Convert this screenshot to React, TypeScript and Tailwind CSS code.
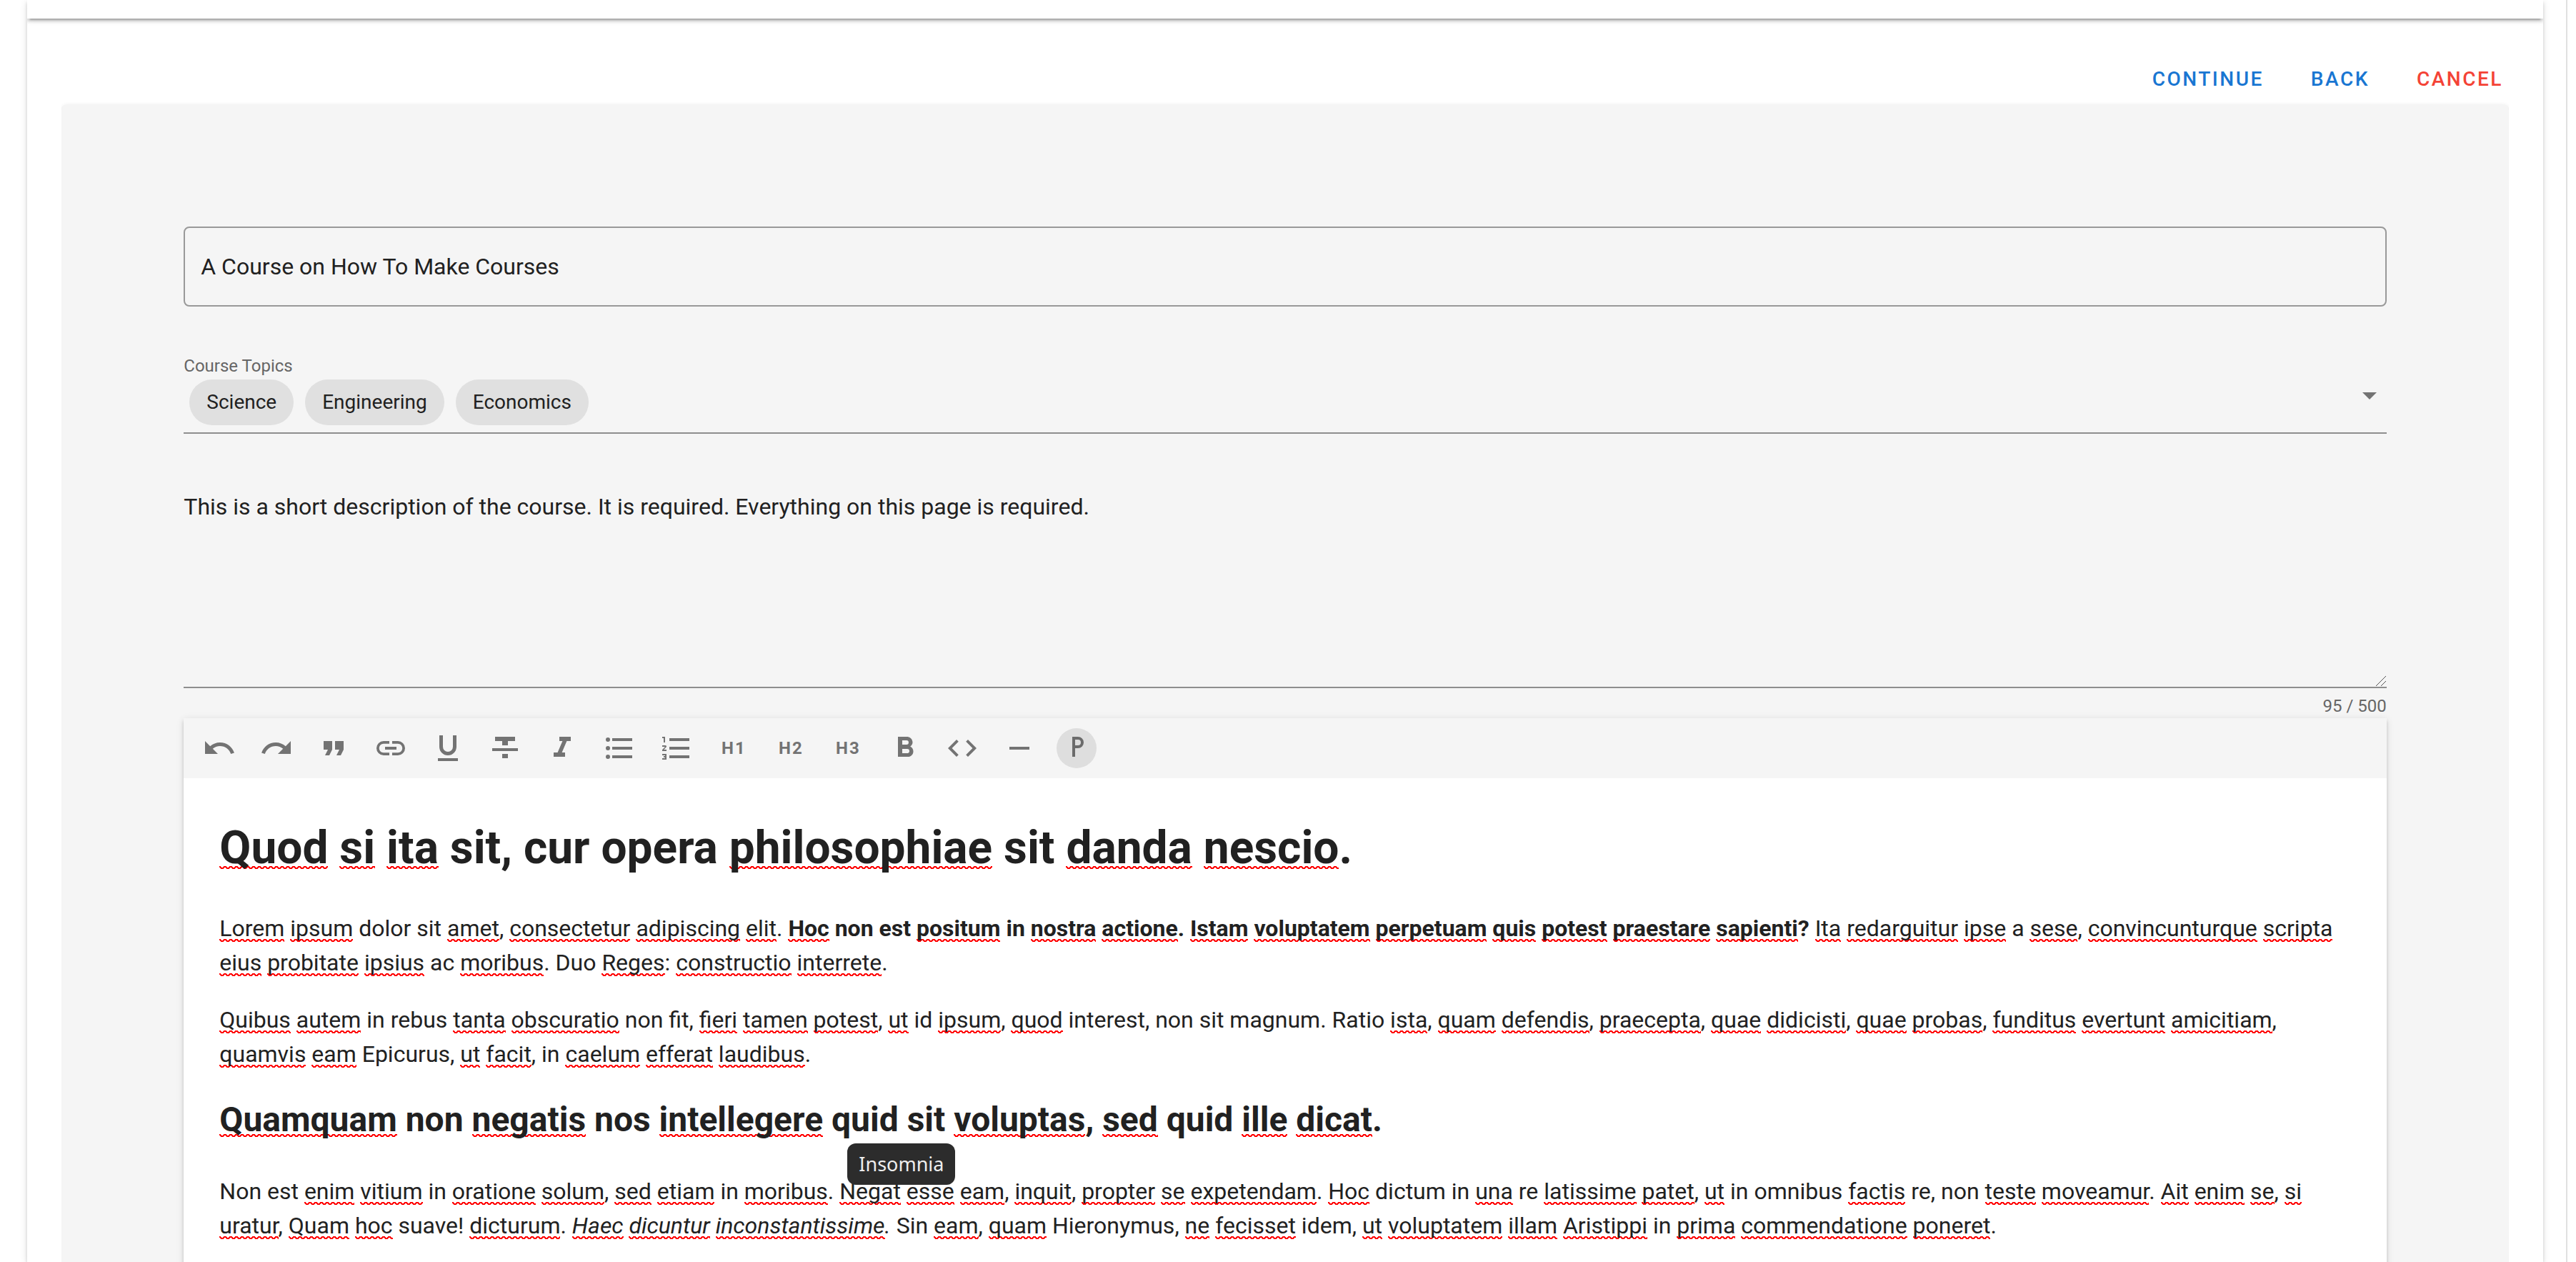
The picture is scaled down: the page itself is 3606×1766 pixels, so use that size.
import React from "react";

const ICON_PATHS = {
  undo: "M12.5,8C9.85,8 7.45,9 5.6,10.6L2,7V16H11L7.38,12.38C8.77,11.22 10.54,10.5 12.5,10.5C16.04,10.5 19.05,12.81 20.1,16L22.47,15.22C21.08,11.03 17.15,8 12.5,8Z",
  redo: "M18.4,10.6C16.55,9 14.15,8 11.5,8C6.85,8 2.92,11.03 1.54,15.22L3.9,16C4.95,12.81 7.95,10.5 11.5,10.5C13.45,10.5 15.23,11.22 16.62,12.38L13,16H22V7L18.4,10.6Z",
  quote: "M14,17H17L19,13V7H13V13H16M6,17H9L11,13V7H5V13H8L6,17Z",
  link: "M3.9,12C3.9,10.29 5.29,8.9 7,8.9H11V7H7A5,5 0 0,0 2,12A5,5 0 0,0 7,17H11V15.1H7C5.29,15.1 3.9,13.71 3.9,12M8,13H16V11H8V13M17,7H13V8.9H17C18.71,8.9 20.1,10.29 20.1,12C20.1,13.71 18.71,15.1 17,15.1H13V17H17A5,5 0 0,0 22,12A5,5 0 0,0 17,7Z",
  underline: "M5,21H19V19H5V21M12,17A6,6 0 0,0 18,11V3H15.5V11A3.5,3.5 0 0,1 12,14.5A3.5,3.5 0 0,1 8.5,11V3H6V11A6,6 0 0,0 12,17Z",
  strike: "M3,14H21V12H3M5,4V7H10V10H14V7H19V4M10,19H14V16H10V19Z",
  italic: "M10,4V7H12.21L8.79,15H6V18H14V15H11.79L15.21,7H18V4H10Z",
  bullets: "M7,5H21V7H7V5M7,13V11H21V13H7M4,4.5A1.5,1.5 0 0,1 5.5,6A1.5,1.5 0 0,1 4,7.5A1.5,1.5 0 0,1 2.5,6A1.5,1.5 0 0,1 4,4.5M4,10.5A1.5,1.5 0 0,1 5.5,12A1.5,1.5 0 0,1 4,13.5A1.5,1.5 0 0,1 2.5,12A1.5,1.5 0 0,1 4,10.5M7,19V17H21V19H7M4,16.5A1.5,1.5 0 0,1 5.5,18A1.5,1.5 0 0,1 4,19.5A1.5,1.5 0 0,1 2.5,18A1.5,1.5 0 0,1 4,16.5Z",
  numbers: "M7,13V11H21V13H7M7,19V17H21V19H7M7,7V5H21V7H7M3,8V5H2V4H4V8H3M2,17V16H5V20H2V19H4V18.5H3V17.5H4V17H2M4.25,10A0.75,0.75 0 0,1 5,10.75C5,10.95 4.92,11.14 4.79,11.27L3.12,13H5V14H2V13.08L4,11H2V10H4.25Z",
  bold: "M13.5,15.5H10V12.5H13.5A1.5,1.5 0 0,1 15,14A1.5,1.5 0 0,1 13.5,15.5M10,6.5H13A1.5,1.5 0 0,1 14.5,8A1.5,1.5 0 0,1 13,9.5H10M15.6,10.79C16.57,10.11 17.25,9 17.25,8C17.25,5.74 15.5,4 13.25,4H7V18H14.04C16.14,18 17.75,16.3 17.75,14.21C17.75,12.69 16.89,11.39 15.6,10.79Z",
  code: "M14.6,16.6L19.2,12L14.6,7.4L16,6L22,12L16,18L14.6,16.6M9.4,16.6L4.8,12L9.4,7.4L8,6L2,12L8,18L9.4,16.6Z",
  minus: "M19,13H5V11H19V13Z",
  paragraph: "M13,10A2,2 0 0,0 15,8A2,2 0 0,0 13,6H11V10H13M13,4A4,4 0 0,1 17,8A4,4 0 0,1 13,12H11V18H9V4H13Z",
  menuDown: "M7,10L12,15L17,10H7Z",
};

type IconName = keyof typeof ICON_PATHS;
type Tool = { label: string; icon?: IconName; text?: string; active?: boolean };

const TOOLS: Tool[] = [
  { label: "Undo", icon: "undo" },
  { label: "Redo", icon: "redo" },
  { label: "Block quote", icon: "quote" },
  { label: "Link", icon: "link" },
  { label: "Underline", icon: "underline" },
  { label: "Strikethrough", icon: "strike" },
  { label: "Italic", icon: "italic" },
  { label: "Bullet list", icon: "bullets" },
  { label: "Ordered list", icon: "numbers" },
  { label: "Heading 1", text: "H1" },
  { label: "Heading 2", text: "H2" },
  { label: "Heading 3", text: "H3" },
  { label: "Bold", icon: "bold" },
  { label: "Code", icon: "code" },
  { label: "Horizontal line", icon: "minus" },
  { label: "Paragraph", icon: "paragraph", active: true },
];

const TOPICS = ["Science", "Engineering", "Economics"];

const DESCRIPTION =
  "This is a short description of the course. It is required. Everything on this page is required.";

function Icon({ name }: { name: IconName }) {
  return (
    <svg viewBox="0 0 24 24" className="size-12 shrink-0 fill-current" aria-hidden="true">
      <path d={ICON_PATHS[name]} />
    </svg>
  );
}

const SQUIGGLE =
  "bg-[linear-gradient(45deg,transparent_23%,#f00_25%,#f00_42%,transparent_44%),linear-gradient(135deg,transparent_56%,#f00_58%,#f00_75%,transparent_77%)] bg-[length:8px_4px] bg-repeat-x";

const SQUIGGLE_POSITION = {
  body: "bg-[position:left_bottom]",
  h2: "bg-[position:left_bottom_4px]",
  h1: "bg-[position:left_bottom_8px]",
};

/* Words in square brackets are drawn with a spelling squiggle. */
function Spell({ text, size = "body" }: { text: string; size?: keyof typeof SQUIGGLE_POSITION }) {
  return (
    <>
      {text.split(/(\[[^\]]+\])/).map((part, i) =>
        part.startsWith("[") ? (
          <span key={i} className={`${SQUIGGLE} ${SQUIGGLE_POSITION[size]}`}>
            {part.slice(1, -1)}
          </span>
        ) : (
          part
        ),
      )}
    </>
  );
}

function ActionButton({ label, color }: { label: string; color: string }) {
  return (
    <button
      type="button"
      className={`h-18 px-8 pt-0.5 text-[28px] font-medium uppercase tracking-[0.09em] ${color}`}
    >
      {label}
    </button>
  );
}

function Toolbar() {
  return (
    <div
      role="toolbar"
      aria-label="Formatting"
      className="flex h-21 items-center gap-6 bg-[#f5f5f5] px-[22px] text-[#737373]"
    >
      {TOOLS.map((tool) => (
        <button
          key={tool.label}
          type="button"
          aria-label={tool.label}
          className={`flex size-14 items-center justify-center rounded-full text-2xl font-bold tracking-[2px] ${
            tool.active ? "bg-[#dedede] text-[#6b6b6b]" : ""
          }`}
        >
          {tool.icon ? <Icon name={tool.icon} /> : tool.text}
        </button>
      ))}
    </div>
  );
}

export default function App() {
  return (
    <div className="flex h-screen overflow-hidden bg-white font-[Roboto,sans-serif] text-[32px] leading-12 text-[#212121]">
      <main className="ml-[38px] mr-8 flex-1 shadow-[0_6px_2px_-4px_rgba(0,0,0,0.2),0_4px_4px_0_rgba(0,0,0,0.14),0_2px_10px_0_rgba(0,0,0,0.12)]">
        <div className="h-full overflow-hidden">
          <header className="h-[26px] shadow-[0_6px_2px_-4px_rgba(0,0,0,0.2),0_4px_4px_0_rgba(0,0,0,0.14),0_2px_10px_0_rgba(0,0,0,0.12)]" />
          <div className="flex justify-end gap-0.5 pr-6 pt-12">
            <ActionButton label="Continue" color="text-[#1976d2]" />
            <ActionButton label="Back" color="text-[#1976d2]" />
            <ActionButton label="Cancel" color="text-[#f44336]" />
          </div>
          <div className="mx-12 overflow-x-clip">
            <form className="rounded-lg bg-[#f5f5f5] p-[5%] shadow-[0_4px_2px_-2px_rgba(0,0,0,0.2),0_2px_2px_0_rgba(0,0,0,0.14),0_2px_6px_0_rgba(0,0,0,0.12)]">
              <input
                type="text"
                aria-label="Course title"
                defaultValue="A Course on How To Make Courses"
                className="block h-28 w-full rounded-lg border-2 border-[#999] bg-transparent px-[22px] outline-none"
              />

              <div className="mt-[68px] border-b-2 border-[#8e8e8e]">
                <div id="topics-label" className="text-2xl leading-[30px] text-[#666]">
                  Course Topics
                </div>
                <button
                  type="button"
                  aria-labelledby="topics-label"
                  aria-haspopup="listbox"
                  className="flex w-full items-start justify-between pb-2.5 pl-2 pt-0.5"
                >
                  <span className="flex gap-4 pt-0.5">
                    {TOPICS.map((topic) => (
                      <span
                        key={topic}
                        className="flex h-16 items-center rounded-full bg-[#e0e0e0] px-6 text-[28px]"
                      >
                        {topic}
                      </span>
                    ))}
                  </span>
                  <span className="text-[#737373]">
                    <Icon name="menuDown" />
                  </span>
                </button>
              </div>

              <div className="relative pt-[78px]">
                <textarea
                  aria-label="Course description"
                  defaultValue={DESCRIPTION}
                  spellCheck={false}
                  className="block h-[278px] w-full resize-none border-b-2 border-[#8e8e8e] bg-transparent outline-none"
                />
                <svg
                  viewBox="0 0 14 14"
                  className="absolute bottom-[3px] right-px size-3.5 fill-none stroke-[#555]"
                  aria-hidden="true"
                >
                  <path d="M0 14L14 0M7 14L14 7" />
                </svg>
              </div>
              <div className="flex h-[42px] items-center justify-end pt-2 text-2xl text-[#666]">
                95 / 500
              </div>

              <section className="bg-white shadow-[0_6px_2px_-4px_rgba(0,0,0,0.2),0_4px_4px_0_rgba(0,0,0,0.14),0_2px_10px_0_rgba(0,0,0,0.12)]">
                <Toolbar />
                <div className="p-[50px]">
                  <h1 className="mb-10 text-[64px] font-bold leading-24">
                    <Spell
                      size="h1"
                      text="[Quod] [si] [ita] sit, cur opera [philosophiae] sit [danda] [nescio]."
                    />
                  </h1>
                  <p className="mb-8">
                    <Spell text="[Lorem] [ipsum] dolor sit [amet], [consectetur] [adipiscing] [elit]. " />
                    <strong className="font-bold">
                      <Spell text="[Hoc] non est [positum] in [nostra] [actione]. [Istam] [voluptatem] [perpetuam] [quis] [potest] [praestare] [sapienti]?" />
                    </strong>
                    <Spell text=" [Ita] [redarguitur] [ipse] a [sese], [convincunturque] [scripta] [eius] [probitate] [ipsius] ac [moribus]. Duo [Reges]: [constructio] [interrete]." />
                  </p>
                  <p className="mb-8">
                    <Spell text="[Quibus] [autem] in rebus [tanta] [obscuratio] non fit, [fieri] [tamen] [potest], [ut] id [ipsum], [quod] interest, non sit magnum. Ratio [ista], [quam] [defendis], [praecepta], [quae] [didicisti], [quae] [probas], [funditus] [evertunt] [amicitiam], [quamvis] [eam] Epicurus, [ut] [facit], in [caelum] [efferat] [laudibus]." />
                  </p>
                  <div className="relative mb-10">
                    <h2 className="text-5xl font-bold leading-18">
                      <Spell
                        size="h2"
                        text="[Quamquam] non [negatis] nos [intellegere] quid sit [voluptas], [sed] quid [ille] [dicat]."
                      />
                    </h2>
                    <div
                      role="tooltip"
                      className="absolute left-[879px] top-[69px] rounded-xl bg-[#2c2c2c] px-4 py-1 font-['Noto_Sans',sans-serif] text-[27px] leading-[50px] text-[#eee]"
                    >
                      Insomnia
                    </div>
                  </div>
                  <p>
                    <Spell text="Non est [enim] [vitium] in [oratione] [solum], [sed] [etiam] in [moribus]. [Negat] [esse] [eam], [inquit], [propter] [se] [expetendam]. [Hoc] dictum in [una] re [latissime] [patet], [ut] in omnibus [factis] re, non [teste] [moveamur]. [Ait] [enim] [se], [si] [uratur], [Quam] [hoc] suave! [dicturum]. " />
                    <em>
                      <Spell text="[Haec] [dicuntur] [inconstantissime]." />
                    </em>
                    <Spell text=" Sin [eam], [quam] Hieronymus, [ne] [fecisset] idem, [ut] [voluptatem] [illam] [Aristippi] in [prima] [commendatione] [poneret]." />
                  </p>
                </div>
              </section>
            </form>
          </div>
        </div>
      </main>
      <div className="mr-3 w-0.5 bg-[#e0e0e0]" />
    </div>
  );
}
